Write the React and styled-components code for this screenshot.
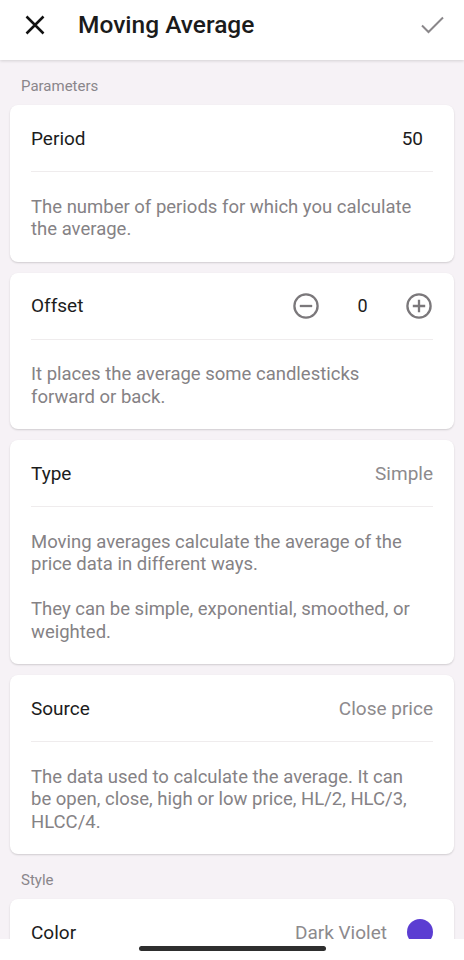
import React from 'react';
import styled, { createGlobalStyle } from 'styled-components';

const GlobalStyle = createGlobalStyle`
  html, body {
    margin: 0;
    padding: 0;
    background: #f6f2f6;
    font-family: Roboto, 'Liberation Sans', sans-serif;
    -webkit-font-smoothing: antialiased;
  }
  body { height: 960px; overflow: hidden; }
`;

const Screen = styled.div`
  width: 464px;
  height: 960px;
  overflow: hidden;
  background: #f6f2f6;
  position: relative;
`;

const Header = styled.header`
  height: 60px;
  box-sizing: border-box;
  background: #ffffff;
  display: flex;
  align-items: center;
  padding: 0 20px 11px 23px;
  box-shadow: 0 1px 3px rgba(0, 0, 0, 0.14);
  position: relative;
  z-index: 1;
`;

const IconButton = styled.button`
  border: 0;
  background: none;
  padding: 0;
  min-width: 22px;
  height: 28px;
  display: flex;
  align-items: center;
  justify-content: center;
  color: ${(p) => p.color || '#111'};
  cursor: pointer;
`;

const Title = styled.h1`
  flex: 1;
  margin: 0 0 0 31px;
  font-size: 24.5px;
  font-weight: 500;
  color: #1b1b1b;
`;

const Content = styled.main`
  padding: 0 10px;
`;

const SectionLabel = styled.div`
  font-size: 15px;
  line-height: 18px;
  color: #8a868b;
  padding: 17px 11px 10px;
`;

const Group = styled.div`
  display: flex;
  flex-direction: column;
  gap: 11px;
`;

const Card = styled.section`
  background: #ffffff;
  border-radius: 8px;
  box-shadow: 0 1px 2px rgba(0, 0, 0, 0.16);
  padding: 0 21px 21px;
`;

const Row = styled.div`
  display: flex;
  align-items: center;
  justify-content: space-between;
  height: 66px;
  border-bottom: 1px solid #efeced;
`;

const Label = styled.span`
  font-size: 19px;
  color: #1c1c1c;
`;

const Value = styled.span`
  font-size: 19px;
  color: ${(p) => (p.muted ? '#8d8a8d' : '#1c1c1c')};
  margin-right: ${(p) => p.gap || 0}px;
`;

const Inline = styled.div`
  display: flex;
  align-items: center;
`;

const StepValue = styled.span`
  width: 85px;
  text-align: center;
  font-size: 18px;
  color: #1c1c1c;
`;

const Description = styled.p`
  margin: 23.5px 0 0;
  padding-right: 14px;
  font-size: 18.5px;
  line-height: 22.5px;
  color: #858285;
  & + & {
    margin-top: 22.5px;
  }
`;

const Swatch = styled.span`
  width: 26px;
  height: 26px;
  border-radius: 50%;
  background: ${(p) => p.color};
`;

const NavBar = styled.div`
  position: absolute;
  left: 0;
  right: 0;
  bottom: 0;
  height: 21px;
  background: #ffffff;
  display: flex;
  justify-content: center;
  padding-top: 7px;
  box-sizing: border-box;
`;

const Handle = styled.div`
  width: 187px;
  height: 5px;
  border-radius: 3px;
  background: #2e2e2e;
`;

const CloseIcon = () => (
  <svg width="24" height="24" viewBox="0 0 24 24" fill="none" stroke="currentColor" strokeWidth="2.5">
    <path d="M3.5 3.5 L20.5 20.5 M20.5 3.5 L3.5 20.5" />
  </svg>
);

const CheckIcon = () => (
  <svg width="23" height="18" viewBox="0 0 23 18" fill="none" stroke="currentColor" strokeWidth="2">
    <path d="M1 9.5 L7.5 16 L22 1.5" />
  </svg>
);

const CircleIcon = ({ plus }) => (
  <svg width="28" height="28" viewBox="0 0 28 28" fill="none" stroke="#7b787b" strokeWidth="2.3">
    <circle cx="14" cy="14" r="11.6" />
    <path d={plus ? 'M7.8 14 H20.2 M14 7.8 V20.2' : 'M7.8 14 H20.2'} />
  </svg>
);

const settings = [
  {
    label: 'Period',
    value: <Value gap={10}>50</Value>,
    text: ['The number of periods for which you calculate the average.'],
  },
  {
    label: 'Offset',
    value: (
      <Inline>
        <CircleIcon />
        <StepValue>0</StepValue>
        <CircleIcon plus />
      </Inline>
    ),
    text: ['It places the average some candlesticks forward or back.'],
  },
  {
    label: 'Type',
    value: <Value muted>Simple</Value>,
    text: [
      'Moving averages calculate the average of the price data in different ways.',
      'They can be simple, exponential, smoothed, or weighted.',
    ],
  },
  {
    label: 'Source',
    value: <Value muted>Close price</Value>,
    text: ['The data used to calculate the average. It can be open, close, high or low price, HL/2, HLC/3, HLCC/4.'],
  },
];

export default function App() {
  return (
    <Screen>
      <GlobalStyle />
      <Header>
        <IconButton aria-label="close">
          <CloseIcon />
        </IconButton>
        <Title>Moving Average</Title>
        <IconButton aria-label="save" color="#8a878a">
          <CheckIcon />
        </IconButton>
      </Header>
      <Content>
        <SectionLabel>Parameters</SectionLabel>
        <Group>
          {settings.map((s) => (
            <Card key={s.label}>
              <Row>
                <Label>{s.label}</Label>
                {s.value}
              </Row>
              {s.text.map((t) => (
                <Description key={t}>{t}</Description>
              ))}
            </Card>
          ))}
        </Group>
        <SectionLabel>Style</SectionLabel>
        <Group>
          <Card>
            <Row>
              <Label>Color</Label>
              <Inline>
                <Value muted gap={20}>Dark Violet</Value>
                <Swatch color="#5b3dd2" />
              </Inline>
            </Row>
          </Card>
        </Group>
      </Content>
      <NavBar>
        <Handle />
      </NavBar>
    </Screen>
  );
}
